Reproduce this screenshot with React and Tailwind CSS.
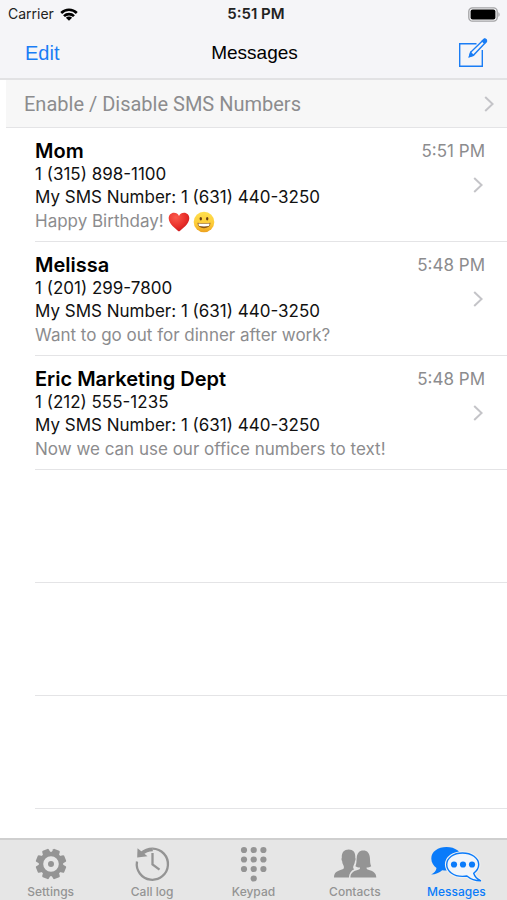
import React, { useState } from "react";
import clsx from "clsx";

const threads = [
  { id: 1, name: "Mom", phone: "1 (315) 898-1100", preview: "Happy Birthday!", emoji: true, time: "5:51 PM" },
  { id: 2, name: "Melissa", phone: "1 (201) 299-7800", preview: "Want to go out for dinner after work?", time: "5:48 PM" },
  { id: 3, name: "Eric Marketing Dept", phone: "1 (212) 555-1235", preview: "Now we can use our office numbers to text!", time: "5:48 PM" },
];

const smsNumber = "1 (631) 440-3250";

function Chevron({ className }) {
  return (
    <svg viewBox="0 0 10 16" className={clsx("h-4 w-[10px] shrink-0", className)} fill="none" stroke="#c4c4c8" strokeWidth="2">
      <path d="M1.2 1 8.6 8 1.2 15" />
    </svg>
  );
}

function WifiIcon() {
  return (
    <svg viewBox="0 0 18 13" className="h-[13px] w-[18px]" fill="none" stroke="#000" strokeWidth="2.6">
      <path d="M1.2 5a11 11 0 0 1 15.6 0" />
      <path d="M4 8.200a7 7 0 0 1 10 0" />
      <path d="M9 12.800 5.900 9.800a4.400 4.400 0 0 1 6.200 0z" fill="#000" stroke="none" />
    </svg>
  );
}

function BatteryIcon() {
  return (
    <svg viewBox="0 0 32 15" className="h-[15px] w-8">
      <rect x="0.8" y="0.8" width="28.4" height="13.4" rx="3.6" fill="#f5f5f7" stroke="#a3a3a5" strokeWidth="1.3" />
      <rect x="2.6" y="2.6" width="24.8" height="9.8" rx="2" fill="#000" />
      <path d="M30.400 5.200c1.600.7 1.600 4 0 4.600z" fill="#a3a3a5" />
    </svg>
  );
}

function ComposeIcon() {
  return (
    <svg viewBox="0 0 30 30" className="h-[30px] w-[30px]" fill="none" stroke="#1a7df5" strokeWidth="1.4">
      <path d="M18.500 5.700H1.700v22.600h22.600V12" />
      <path d="m11.400 18.600 1.200-4.300L25.600 1.700c.6-.6 1.200-.6 1.800 0l.6.600c.6.6.6 1.200 0 1.800L15.400 17.300z" />
      <path d="m11.600 18.400 1.200-3.800 2.300 2.500zM24.300 3 26 1.400c.7-.6 1.300-.4 1.900.2.600.6.8 1.200.2 1.900l-1.600 1.700z" fill="#1a7df5" />
    </svg>
  );
}

function HeartEmoji() {
  return (
    <svg viewBox="0 0 22 20" className="h-5 w-[22px]" role="img" aria-label="Red heart">
      <defs>
        <radialGradient id="heart" cx="0.35" cy="0.25" r="0.8">
          <stop offset="0" stopColor="#fb5a4c" />
          <stop offset="0.6" stopColor="#e9302a" />
          <stop offset="1" stopColor="#c8171c" />
        </radialGradient>
      </defs>
      <path d="M11 19.600C7.600 16.600.7 11.800.7 6.200.7 3 3 .7 6 .7c2.200 0 4 1.200 5 3.200 1-2 2.800-3.200 5-3.200 3 0 5.300 2.300 5.300 5.500 0 5.600-6.900 10.400-10.300 13.400z" fill="url(#heart)" />
    </svg>
  );
}

function GrinEmoji() {
  return (
    <svg viewBox="0 0 22 22" className="h-[22px] w-[22px]" role="img" aria-label="Grinning face">
      <defs>
        <linearGradient id="face" x1="0" y1="0" x2="0" y2="1">
          <stop offset="0" stopColor="#ffe04f" />
          <stop offset="0.6" stopColor="#fdcb38" />
          <stop offset="1" stopColor="#eda11f" />
        </linearGradient>
      </defs>
      <circle cx="11" cy="11" r="10.3" fill="url(#face)" />
      <ellipse cx="7.8" cy="7.800" rx="1.2" ry="1.700" fill="#6b3f12" />
      <ellipse cx="14.2" cy="7.800" rx="1.2" ry="1.700" fill="#6b3f12" />
      <path d="M4.600 11.800c4.300.7 8.500.7 12.800 0 .2 3.400-2.800 5.400-6.400 5.400s-6.600-2-6.400-5.400z" fill="#8a5718" />
      <path d="M5.400 12.400c3.700.6 7.500.6 11.200 0 0 1.100-.4 2.100-1 2.700-3 .6-6.200.6-9.200 0-.6-.6-1-1.600-1-2.700z" fill="#fff" />
    </svg>
  );
}

function GearIcon() {
  return (
    <svg viewBox="0 0 32 32" className="h-8 w-8">
      <g fill="#949494">
        {[22.5, 67.5, 112.5, 157.5, 202.5, 247.5, 292.5, 337.5].map((angle) => (
          <path key={angle} d="M11.800 6 12.500 1.500Q12.700.7 13.500.7h5q.8 0 1 .8L20.200 6z" transform={`rotate(${angle} 16 16)`} />
        ))}
      </g>
      <circle cx="16" cy="16" r="10" fill="none" stroke="#949494" strokeWidth="4.4" />
      <circle cx="16" cy="16" r="3" fill="#949494" />
    </svg>
  );
}

function CallLogIcon() {
  return (
    <svg viewBox="0 0 36 36" className="h-9 w-9" fill="none" stroke="#949494" strokeWidth="2.3">
      <path d="M3 15.500A15.600 15.600 0 1 0 18.600 2.600" />
      <path d="M7.500 7.600c3-2.700 6.800-4.200 11.300-4.300" strokeWidth="3.8" />
      <path d="M3.500 2.200 3.200 11.500 13.500 10.300z" fill="#949494" stroke="none" />
      <path d="M18.500 7v11.500l7 5.200" />
    </svg>
  );
}

function KeypadIcon() {
  const dots = [[4, 4], [13.7, 4], [23.4, 4], [4, 13.5], [13.7, 13.5], [23.4, 13.5], [4, 23], [13.7, 23], [23.4, 23], [13.7, 32.5]];
  return (
    <svg viewBox="0 0 27 36" className="h-9 w-[27px]" fill="#949494">
      {dots.map(([x, y]) => (
        <circle key={`${x}-${y}`} cx={x} cy={y} r="3.1" />
      ))}
    </svg>
  );
}

function ContactsIcon() {
  return (
    <svg viewBox="0 0 44 30" className="h-[30px] w-11" fill="#949494">
      <path d="M1 28.500c.1-4.700 2.200-6.200 8.600-8.200 1.700-.6 1.600-2.700.8-4.100-.8-1.200-1.200-2.700-1.300-4.200-.7-.9-.8-2.300-.3-3.200C8.500 3.500 11.200.6 15.700.6s7 2.900 6.600 8.200c.5.900.4 2.300-.3 3.200-.2 1.600-.6 3-1.300 4.200-.8 1.500-.8 3.300.5 4-3.300 1.600-5 4-5.300 8.300z" />
      <path d="M17.400 28.500c.2-4.500 2.600-6.300 8.500-8 .9-.3 1.200-1.100 1.100-2-1.900 0-3.400-.4-4.600-1.300 1.300-2.500 1-5.200 1.300-8.500.4-4.500 2.500-7.200 6.600-7.200s6.200 2.700 6.600 7.200c.3 3.300 0 6 1.300 8.500-1.200.9-2.700 1.300-4.600 1.300-.1.900.2 1.700 1.100 2 5.900 1.700 8.400 3.500 8.600 8z" />
    </svg>
  );
}

function BubblesIcon() {
  return (
    <svg viewBox="0 0 52 36" className="h-9 w-[52px]">
      <path d="M16.500 1C8 1 1.300 5.600 1.300 12.400c0 4 2.400 7.400 5.200 9.600C6.300 24.700 4 27 1.200 28.600c4.200-.2 8.200-1.800 11-4.300 1.500.2 3 .3 4.300.3 8.700 0 15.500-5.200 15.500-12C32 5.800 25.200 1 16.500 1z" fill="#0a7bfa" />
      <path d="M32.500 7C23.600 7 16.700 11.900 16.700 18.600S23.600 30.400 32.500 30.400c1.600 0 3-.1 4.400-.4 3.600 3 8.600 4.900 14 4.800-3.500-1.500-6.100-4-7.200-7.600 3-2.100 5-5.100 5-8.600C48.700 11.900 41.400 7 32.500 7z" fill="#f1f5fa" stroke="#f1f1f1" strokeWidth="3.6" />
      <path d="M32.500 7C23.600 7 16.700 11.900 16.700 18.600S23.600 30.400 32.500 30.400c1.600 0 3-.1 4.400-.4 3.600 3 8.600 4.900 14 4.800-3.500-1.500-6.100-4-7.200-7.600 3-2.100 5-5.100 5-8.600C48.700 11.900 41.400 7 32.500 7z" fill="#f1f5fa" stroke="#0a7bfa" strokeWidth="1.4" />
      <g fill="#0a7bfa">
        <circle cx="24" cy="18.500" r="3.1" />
        <circle cx="33" cy="18.500" r="3.1" />
        <circle cx="42" cy="18.500" r="3.1" />
      </g>
    </svg>
  );
}

const tabs = [
  { id: "settings", label: "Settings", Icon: GearIcon },
  { id: "calls", label: "Call log", Icon: CallLogIcon },
  { id: "keypad", label: "Keypad", Icon: KeypadIcon },
  { id: "contacts", label: "Contacts", Icon: ContactsIcon },
  { id: "messages", label: "Messages", Icon: BubblesIcon },
];

function Thread({ thread }) {
  return (
    <li className="pl-[35px]">
      <button type="button" className="flex w-full justify-between border-b border-[#e4e4e6] pt-[11px] pr-[22px] pb-[6px] text-left">
        <span className="block min-w-0">
          <span className="block text-xl leading-6 font-semibold text-black">{thread.name}</span>
          <span className="block text-[17px] leading-[23px] text-[#111]">{thread.phone}</span>
          <span className="block text-[17px] leading-[23px] text-[#111]">My SMS Number: {smsNumber}</span>
          <span className="flex h-[26px] items-center text-[17px] text-[#8c8c8e]">
            {thread.preview}
            {thread.emoji && (
              <span className="ml-1 flex items-center gap-[3px]">
                <HeartEmoji />
                <GrinEmoji />
              </span>
            )}
          </span>
        </span>
        <span className="flex shrink-0 flex-col items-end text-[17px] leading-6 text-[#8c8c8e]">
          {thread.time}
          <Chevron className="mt-[14px] mr-[2px]" />
        </span>
      </button>
    </li>
  );
}

export default function App() {
  const [active, setActive] = useState("messages");

  return (
    <div className="flex min-h-screen flex-col bg-white font-['Inter',sans-serif]">
      <header className="border-b-2 border-[#e2e2e4] bg-[#f5f5f8]">
        <div className="grid h-7 grid-cols-3 items-center pr-[7px] pl-2 text-sm text-[#222]">
          <span className="flex items-center gap-[6px]">
            Carrier
            <WifiIcon />
          </span>
          <span className="pl-1 text-center text-[15px] font-semibold">5:51 PM</span>
          <span className="flex justify-end">
            <BatteryIcon />
          </span>
        </div>
        <div className="grid h-[50px] grid-cols-3 items-center pr-[19px] pl-[25px] font-['Liberation_Sans',Arial,sans-serif] text-[19px]">
          <button type="button" className="text-left text-xl text-[#1a7df5]">Edit</button>
          <h1 className="pr-1 text-center text-black">Messages</h1>
          <button type="button" aria-label="New message" className="flex justify-end">
            <ComposeIcon />
          </button>
        </div>
      </header>

      <main className="flex-1">
        <div className="pl-[6px]">
          <button type="button" className="flex h-12 w-full items-center justify-between border-b border-[#e4e4e6] bg-[#f7f7f7] pr-[13px] pl-[18px] text-left font-['Roboto',sans-serif] text-xl text-[#8c8c8e]">
            Enable / Disable SMS Numbers
            <Chevron />
          </button>
        </div>
        <ul>
          {threads.map((thread) => (
            <Thread key={thread.id} thread={thread} />
          ))}
        </ul>
        {/* Empty rows below the last conversation */}
        <div className="pl-[35px]" aria-hidden="true">
          <div className="h-[113px] border-b border-[#e4e4e6]" />
          <div className="h-[113px] border-b border-[#e4e4e6]" />
          <div className="h-[113px] border-b border-[#e4e4e6]" />
        </div>
      </main>

      <nav className="grid grid-cols-5 border-t-2 border-[#cfcfcf] bg-[#e6e6e6]">
        {tabs.map(({ id, label, Icon }) => (
          <button
            key={id}
            type="button"
            onClick={() => setActive(id)}
            className={clsx(
              "flex flex-col items-center pt-1 text-xs leading-4 font-medium",
              active === id ? "text-[#0a7bfa]" : "text-[#949494]"
            )}
          >
            <span className="flex h-10 items-center">
              <Icon />
            </span>
            {label}
          </button>
        ))}
      </nav>
    </div>
  );
}
